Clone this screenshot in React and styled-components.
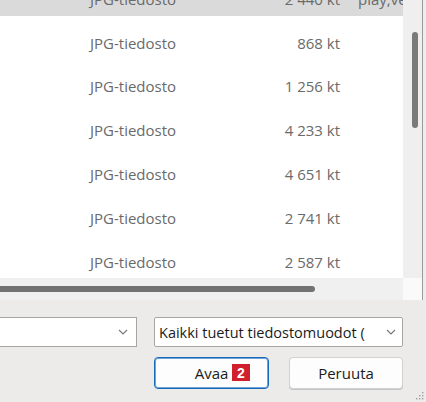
import React from "react";
import styled, { createGlobalStyle } from "styled-components";

const GlobalStyle = createGlobalStyle`
  html, body {
    margin: 0;
    padding: 0;
    background: #ecebea;
  }
  body {
    font-family: "Open Sans", "Noto Sans", "Liberation Sans", sans-serif;
  }
`;

const files = [
  { type: "JPG-tiedosto", size: "2 440 kt", tags: "play,vesi,kesä", selected: true },
  { type: "JPG-tiedosto", size: "868 kt" },
  { type: "JPG-tiedosto", size: "1 256 kt" },
  { type: "JPG-tiedosto", size: "4 233 kt" },
  { type: "JPG-tiedosto", size: "4 651 kt" },
  { type: "JPG-tiedosto", size: "2 741 kt" },
  { type: "JPG-tiedosto", size: "2 587 kt" },
];

const Chevron = () => (
  <svg width="10" height="6" viewBox="0 0 10 6">
    <path d="M1 1l4 4 4-4" fill="none" stroke="#7a7a7a" strokeWidth="1.2" />
  </svg>
);

const App = () => {
  return (
    <Window>
      <GlobalStyle />
      <Browser>
        <ListViewport>
          <ScrolledList>
            {files.map((f, i) => (
              <Row key={i}>
                <RowInner $selected={f.selected}>
                  <TypeCell>{f.type}</TypeCell>
                  <SizeCell>{f.size}</SizeCell>
                  <TagCell>{f.tags}</TagCell>
                </RowInner>
              </Row>
            ))}
          </ScrolledList>
        </ListViewport>
        <VTrack>
          <VThumb />
        </VTrack>
        <EdgeLine />
        <HTrack>
          <HThumb />
        </HTrack>
        <Corner />
        <EdgeLine />
      </Browser>

      <Footer>
        <NameCombo>
          <Chevron />
        </NameCombo>
        <FilterCombo>
          <ComboText>Kaikki tuetut tiedostomuodot (</ComboText>
          <Chevron />
        </FilterCombo>
        <Button $primary $area="open">
          Avaa
          <Badge>2</Badge>
        </Button>
        <Button $area="cancel">Peruuta</Button>
      </Footer>
      <Grip viewBox="0 0 8 8" width="8" height="8">
        <rect x="6" y="0" width="1.4" height="1.4" fill="#a0a0a0" />
        <rect x="3" y="3" width="1.4" height="1.4" fill="#a0a0a0" />
        <rect x="6" y="3" width="1.4" height="1.4" fill="#a0a0a0" />
        <rect x="0" y="6" width="1.4" height="1.4" fill="#a0a0a0" />
        <rect x="3" y="6" width="1.4" height="1.4" fill="#a0a0a0" />
        <rect x="6" y="6" width="1.4" height="1.4" fill="#a0a0a0" />
      </Grip>
    </Window>
  );
};

const Window = styled.div`
  position: relative;
  width: 426px;
  height: 402px;
  overflow: hidden;
  background: #ecebea;
`;

const Browser = styled.div`
  display: grid;
  grid-template-columns: 403px 19px 4px;
  grid-template-rows: 278px 22px;
`;

const ListViewport = styled.div`
  background: #ffffff;
  overflow: hidden;
`;

const ScrolledList = styled.div`
  margin-top: -23px;
`;

const Row = styled.div`
  box-sizing: border-box;
  height: 43.8px;
  padding: 5px 0;
`;

const RowInner = styled.div`
  height: 100%;
  display: grid;
  grid-template-columns: 90px 150px 100px auto;
  align-items: center;
  white-space: nowrap;
  font-size: 15px;
  color: #6a6a6a;
  background: ${({ $selected }) => ($selected ? "#dadada" : "transparent")};
`;

const TypeCell = styled.span`
  grid-column: 2;
`;

const SizeCell = styled.span`
  text-align: right;
`;

const TagCell = styled.span`
  padding-left: 18px;
  overflow: hidden;
`;

const VTrack = styled.div`
  background: #efefef;
  padding: 32px 0 0 9px;
`;

const VThumb = styled.div`
  width: 6px;
  height: 96px;
  border-radius: 3px;
  background: #7a7a7a;
`;

const EdgeLine = styled.div`
  background: #ededed;
  border-left: 1px solid #9a9a9a;
`;

const HTrack = styled.div`
  background: #f0f0f0;
  padding-top: 8px;
`;

const HThumb = styled.div`
  width: 315px;
  height: 6px;
  border-radius: 0 3px 3px 0;
  background: #727272;
`;

const Corner = styled.div`
  background: #fafafa;
`;

const Footer = styled.div`
  display: grid;
  grid-template-columns: 137px 17px 115px 20px 114px;
  grid-template-rows: 30px 32px;
  grid-template-areas:
    "name . filter filter filter"
    ". . open . cancel";
  row-gap: 10px;
  padding-top: 17px;
`;

const ComboBase = styled.div`
  box-sizing: border-box;
  display: flex;
  align-items: center;
  background: #ffffff;
  border: 1px solid #a6a6a6;
  height: 30px;
`;

const NameCombo = styled(ComboBase)`
  grid-area: name;
  border-left: none;
  justify-content: flex-end;
  padding-right: 8px;
`;

const FilterCombo = styled(ComboBase)`
  grid-area: filter;
  border-radius: 2px;
  padding: 0 6px 0 4px;
  justify-content: space-between;
`;

const ComboText = styled.span`
  font-size: 14.5px;
  color: #1b1b1b;
  white-space: nowrap;
`;

const Button = styled.div`
  grid-area: ${({ $area }) => $area};
  position: relative;
  box-sizing: border-box;
  height: 32px;
  display: flex;
  align-items: center;
  justify-content: center;
  font-size: 15px;
  color: #1b1b1b;
  background: #fdfdfd;
  border-radius: 4px;
  border: 1px solid ${({ $primary }) => ($primary ? "#1769b8" : "#d2d2d2")};
  box-shadow: ${({ $primary }) =>
    $primary ? "inset 0 0 0 1px #6ea4da" : "0 1px 0 #c4c4c4"};
`;

const Badge = styled.span`
  position: absolute;
  left: 77px;
  top: 6px;
  width: 18px;
  height: 17px;
  display: flex;
  align-items: center;
  justify-content: center;
  background: #d0202e;
  color: #ffffff;
  font-family: "Liberation Sans", Arial, sans-serif;
  font-weight: bold;
  font-size: 14px;
`;

const Grip = styled.svg`
  position: absolute;
  right: 2px;
  bottom: 2px;
`;

export default App;
